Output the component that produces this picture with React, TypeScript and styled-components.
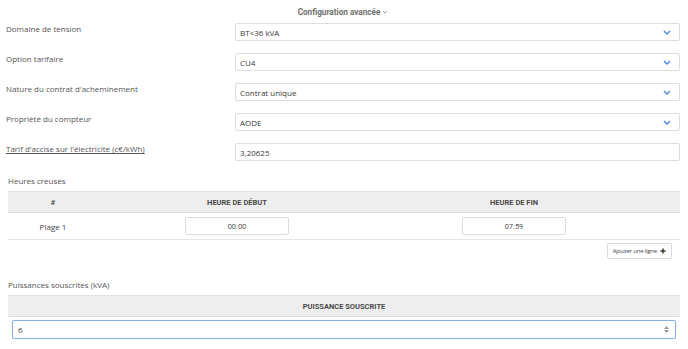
import React from "react";
import styled, { createGlobalStyle } from "styled-components";

const Global = createGlobalStyle`
  html, body { margin: 0; padding: 0; background: #fff; }
  body { font-family: "Open Sans", "Liberation Sans", sans-serif; color: #555; }
  * { box-sizing: border-box; }
`;

const Page = styled.div`
  width: 688px;
  height: 349px;
  padding: 0 8px 0 6px;
  overflow: hidden;
`;

const Title = styled.div`
  height: 23px;
  padding-top: 6px;
  text-align: center;
  font-family: Roboto, "Liberation Sans", sans-serif;
  font-weight: 700;
  font-size: 8.2px;
  line-height: 12px;
  color: #707070;
  display: flex;
  justify-content: center;
  align-items: flex-start;
  gap: 2px;
`;

const FormRow = styled.div`
  display: grid;
  grid-template-columns: 229px 1fr;
  height: 30px;
`;

const Label = styled.div<{ $underline?: boolean }>`
  font-size: 8px;
  line-height: 10px;
  padding-top: 1px;
  color: #555;
  text-decoration: ${(p) => (p.$underline ? "underline" : "none")};
`;

const Field = styled.div`
  height: 18px;
  border: 1px solid #dedede;
  border-radius: 2px;
  display: flex;
  align-items: center;
  justify-content: space-between;
  padding: 0 8px 0 4px;
  font-size: 8px;
  color: #3a3a3a;
  background: #fff;
`;

const SectionTitle = styled.div<{ $mt: number }>`
  margin-top: ${(p) => p.$mt}px;
  padding-left: 2px;
  font-size: 8px;
  line-height: 12px;
  color: #555;
`;

const Table = styled.table`
  margin-left: 2px;
  margin-top: 4px;
  width: 672px;
  border-collapse: collapse;
  table-layout: fixed;
`;

const Th = styled.th<{ $w?: number }>`
  width: ${(p) => (p.$w ? `${p.$w}px` : "auto")};
  background: #eeeeee;
  border-top: 1px solid #e2e2e2;
  border-bottom: 1px solid #dcdcdc;
  font-family: Roboto, "Liberation Sans", sans-serif;
  font-weight: 700;
  font-size: 7.5px;
  color: #4a4a4a;
  text-transform: uppercase;
  height: 21px;
  padding: 0;
  text-align: center;
`;

const Td = styled.td`
  border-bottom: 1px solid #e4e4e4;
  height: 27px;
  padding: 0;
  text-align: center;
  font-size: 8px;
  color: #444;
`;

const TimeBox = styled.div`
  margin: 0 auto;
  width: 104px;
  height: 18px;
  border: 1px solid #dcdcdc;
  border-radius: 2px;
  display: flex;
  align-items: center;
  justify-content: center;
  font-family: Roboto, "Liberation Sans", sans-serif;
  font-size: 7.5px;
  color: #555;
`;

const ButtonRow = styled.div`
  display: flex;
  justify-content: flex-end;
  padding: 3px 8px 0 0;
`;

const AddButton = styled.button`
  height: 16px;
  padding: 0 5px;
  border: 1px solid #dadada;
  border-radius: 2px;
  background: #fff;
  font-family: "Open Sans", "Liberation Sans", sans-serif;
  font-size: 6px;
  letter-spacing: -0.2px;
  color: #444;
  display: flex;
  align-items: center;
  gap: 3px;
`;

const PowerCell = styled.td`
  padding: 3px 4px 0 4px;
`;

const NumberBox = styled.div`
  height: 19px;
  border: 1px solid #86aee8;
  border-radius: 2px;
  box-shadow: 0 0 1px rgba(90, 140, 230, 0.5);
  display: flex;
  align-items: center;
  justify-content: space-between;
  padding: 0 6px 0 5px;
  font-size: 8px;
  color: #444;
`;

const Spinner = styled.div`
  display: flex;
  flex-direction: column;
  gap: 1px;
  align-items: center;
`;

const Chevron = () => (
  <svg width="8" height="5" viewBox="0 0 8 5">
    <path d="M1 1 L4 4 L7 1" fill="none" stroke="#4a86e0" strokeWidth="1.4" />
  </svg>
);

const TitleChevron = () => (
  <svg width="6" height="10" viewBox="0 0 6 10">
    <path d="M1 5 L3 7 L5 5" fill="none" stroke="#888" strokeWidth="0.8" />
  </svg>
);

const Plus = () => (
  <svg width="6" height="6" viewBox="0 0 6 6">
    <path d="M3 0.5 V5.5 M0.5 3 H5.5" stroke="#333" strokeWidth="1.4" />
  </svg>
);

const rows: { label: string; value: string; select: boolean; underline?: boolean }[] = [
  { label: "Domaine de tension", value: "BT<36 kVA", select: true },
  { label: "Option tarifaire", value: "CU4", select: true },
  { label: "Nature du contrat d'acheminement", value: "Contrat unique", select: true },
  { label: "Propriété du compteur", value: "AODE", select: true },
  { label: "Tarif d'accise sur l'électricité (c€/kWh)", value: "3,20625", select: false, underline: true },
];

export default function App() {
  return (
    <Page>
      <Global />
      <Title>
        Configuration avancée <TitleChevron />
      </Title>
      {rows.map((r) => (
        <FormRow key={r.label}>
          <Label $underline={r.underline}>{r.label}</Label>
          <Field>
            <span>{r.value}</span>
            {r.select && <Chevron />}
          </Field>
        </FormRow>
      ))}
      <SectionTitle $mt={2}>Heures creuses</SectionTitle>
      <Table>
        <thead>
          <tr>
            <Th $w={90}>#</Th>
            <Th $w={278}>Heure de début</Th>
            <Th $w={276}>Heure de fin</Th>
            <Th />
          </tr>
        </thead>
        <tbody>
          <tr>
            <Td>Plage 1</Td>
            <Td>
              <TimeBox>00:00</TimeBox>
            </Td>
            <Td>
              <TimeBox>07:59</TimeBox>
            </Td>
            <Td />
          </tr>
        </tbody>
      </Table>
      <ButtonRow>
        <AddButton>
          Ajouter une ligne <Plus />
        </AddButton>
      </ButtonRow>
      <SectionTitle $mt={20}>Puissances souscrites (kVA)</SectionTitle>
      <Table>
        <thead>
          <tr>
            <Th>Puissance souscrite</Th>
          </tr>
        </thead>
        <tbody>
          <tr>
            <PowerCell>
              <NumberBox>
                <span>6</span>
                <Spinner>
                  <svg width="5" height="3" viewBox="0 0 5 3">
                    <path d="M0 3 L2.5 0 L5 3 Z" fill="#999" />
                  </svg>
                  <svg width="5" height="3" viewBox="0 0 5 3">
                    <path d="M0 0 L2.5 3 L5 0 Z" fill="#999" />
                  </svg>
                </Spinner>
              </NumberBox>
            </PowerCell>
          </tr>
        </tbody>
      </Table>
    </Page>
  );
}
